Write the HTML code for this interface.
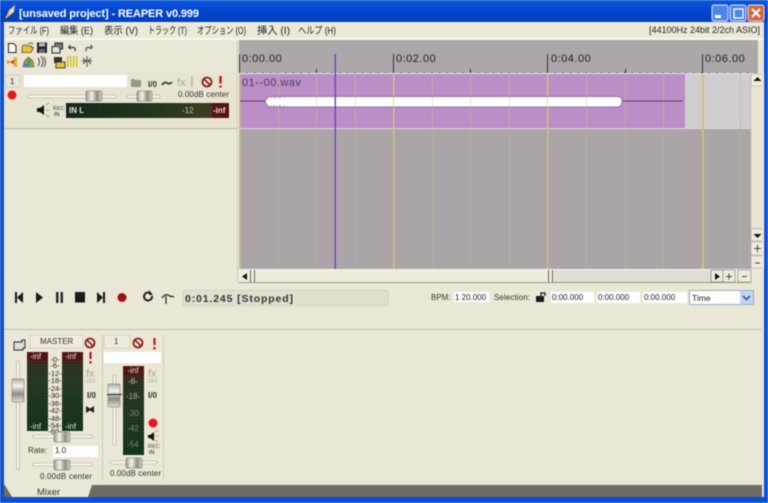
<!DOCTYPE html>
<html><head><meta charset="utf-8"><style>
html,body{margin:0;padding:0;background:#ece9d8;width:768px;height:503px;overflow:hidden}
svg{display:block;filter:blur(.4px)}
text{font-family:"Liberation Sans","Noto Sans CJK JP",sans-serif;fill:#222}
</style></head><body>
<svg xmlns="http://www.w3.org/2000/svg" width="768" height="503" viewBox="0 0 768 503">
<defs>
<linearGradient id="tb" x1="0" y1="0" x2="0" y2="1"><stop offset="0" stop-color="#0a5fe0"/><stop offset=".15" stop-color="#0a4fd8"/><stop offset=".6" stop-color="#0044cc"/><stop offset="1" stop-color="#0340b8"/></linearGradient>
<linearGradient id="th" x1="0" y1="0" x2="1" y2="0"><stop offset="0" stop-color="#9c9a90"/><stop offset=".35" stop-color="#f4f3ee"/><stop offset=".7" stop-color="#8e8c84"/><stop offset="1" stop-color="#d8d6cc"/></linearGradient>
<linearGradient id="tv" x1="0" y1="0" x2="0" y2="1"><stop offset="0" stop-color="#b0aea6"/><stop offset=".3" stop-color="#f4f3ee"/><stop offset=".65" stop-color="#8e8c84"/><stop offset="1" stop-color="#e0ded4"/></linearGradient>
<linearGradient id="hm" x1="0" y1="0" x2="1" y2="0"><stop offset="0" stop-color="#13281a"/><stop offset=".6" stop-color="#25391f"/><stop offset=".85" stop-color="#3f3a22"/><stop offset="1" stop-color="#4c3a22"/></linearGradient>
<linearGradient id="vm" x1="0" y1="0" x2="0" y2="1"><stop offset="0" stop-color="#3e2a20"/><stop offset=".3" stop-color="#2c3a26"/><stop offset="1" stop-color="#14381f"/></linearGradient>
<pattern id="hatch" width="2" height="2" patternUnits="userSpaceOnUse"><rect width="2" height="2" fill="#dcd9cf"/><rect width="1" height="1" fill="#ecebe4"/></pattern>
<pattern id="ribs" width="3" height="3" patternUnits="userSpaceOnUse"><rect width="3" height="1" fill="#000" opacity=".18"/></pattern>
</defs>

<!-- window frame -->
<rect width="768" height="503" fill="#0a4fd6"/>
<rect width="768" height="22" fill="url(#tb)"/>
<rect x="4" y="22" width="760" height="475" fill="#ebe7d8"/>
<!-- title -->
<path d="M6 18 L9 10 L15 5 L14 12 L9 16Z" fill="#e8dcc0" stroke="#8a7a50" stroke-width=".6"/>
<path d="M6 18 L9 13" stroke="#d0c040" stroke-width="1.600"/>
<text x="19" y="17" font-size="11" font-weight="bold" style="fill:#fff" textLength="180">[unsaved project] - REAPER v0.999</text>
<!-- window buttons -->
<rect x="712" y="5" width="16" height="16" rx="2" fill="#4f84ea" stroke="#dfe8fa"/>
<rect x="715" y="15" width="6" height="3" fill="#fff"/>
<rect x="730" y="5" width="16" height="16" rx="2" fill="#4f84ea" stroke="#dfe8fa"/>
<rect x="734" y="9" width="9" height="9" fill="none" stroke="#fff" stroke-width="1.300"/>
<rect x="748" y="5" width="16" height="16" rx="2" fill="#d8663e" stroke="#f4dfd6"/>
<path d="M752 9 L760 17 M760 9 L752 17" stroke="#fff" stroke-width="2"/>
<!-- menu -->
<rect x="4" y="22" width="760" height="17" fill="#ece9d8"/>
<rect x="4" y="38" width="760" height="2" fill="#f8f6ee"/>
<g font-size="10">
<text x="8" y="34" textLength="41" lengthAdjust="spacingAndGlyphs">ファイル (F)</text>
<text x="60" y="34" textLength="33" lengthAdjust="spacingAndGlyphs">編集 (E)</text>
<text x="104" y="34" textLength="34" lengthAdjust="spacingAndGlyphs">表示 (V)</text>
<text x="148" y="34" textLength="39" lengthAdjust="spacingAndGlyphs">トラック (T)</text>
<text x="197" y="34" textLength="49" lengthAdjust="spacingAndGlyphs">オプション (O)</text>
<text x="257" y="34" textLength="33" lengthAdjust="spacingAndGlyphs">挿入 (I)</text>
<text x="298" y="34" textLength="38" lengthAdjust="spacingAndGlyphs">ヘルプ (H)</text>
<text x="649" y="33" font-size="9.500" textLength="111" lengthAdjust="spacingAndGlyphs">[44100Hz 24bit 2/2ch ASIO]</text>
</g>

<!-- toolbar icons -->
<path d="M8.500 43.500h5l2.500 2.500v6.500H8.500z" fill="#fff" stroke="#222"/>
<path d="M22 52.500v-6l1.500-1.500h3l1 1h4v1.500h2l-2.500 5z" fill="#e8c040" stroke="#5a4a10" stroke-width=".8"/>
<path d="M28 44q3-2 5 0" stroke="#2a7a2a" fill="none"/>
<rect x="37" y="42.500" width="10" height="10.500" fill="#22222e"/><rect x="39" y="43" width="6" height="3.500" fill="#b8b8b8"/><rect x="39" y="49" width="6" height="4" fill="#667"/>
<path d="M52 46.500h8v6.500h-8z" fill="#e4e4dc" stroke="#222"/><path d="M55 46v-3h7.500v6h-2.500" fill="#777" stroke="#222"/>
<path d="M68.500 47.500l2-2.500M68.500 47.500l2.500 1.500M69 47.500h4.500a2 2 0 0 1 1 3.500" fill="none" stroke="#334" stroke-width="1.200"/>
<path d="M92.500 47.500l-2-2.500M92.500 47.500l-2.500 1.500M92 47.500h-4.500a2 2 0 0 0-1 3.500" fill="none" stroke="#556" stroke-width="1.200"/>
<path d="M7 59.500l4 2.500-4 2.500z" fill="#e8a020"/><path d="M10 62l7-4.500v9z" fill="#e03a20"/><rect x="14" y="57" width="3" height="10" fill="#e8b020"/>
<path d="M23 67l1.500-6 4-4 4.500 4 1 6z" fill="#c0a040" stroke="#443" stroke-width=".6"/><rect x="27" y="59" width="4" height="8" fill="#50a050"/><rect x="24" y="63" width="4" height="4" fill="#5080c0"/>
<path d="M38 58q3 4 0 8M41 56q4 6 0 11M44 57q3 5 0 10" fill="none" stroke="#555" stroke-width="1.100"/>
<rect x="54" y="57" width="8" height="6" fill="#333"/><rect x="56" y="62" width="9" height="6" fill="#e8c040" stroke="#222" stroke-width=".8"/>
<g fill="#d8c020"><rect x="67" y="56" width="1.500" height="11"/><rect x="70" y="56" width="1.500" height="11"/><rect x="73" y="56" width="1.500" height="11"/><rect x="76" y="56" width="1.500" height="11"/></g>
<path d="M87 56v11M82 61h10M83 58l3 3-3 3M91 58l-3 3 3 3" stroke="#444" fill="none" stroke-width=".9"/>

<!-- arrange view -->
<rect x="239" y="40" width="519" height="33" fill="#aca7a9"/>
<rect x="240" y="73" width="511" height="1" fill="#e8e4e4"/>
<rect x="239" y="129" width="512" height="140" fill="#aba5a8"/>
<rect x="240" y="74" width="445" height="54" fill="#bb8ec8"/>
<rect x="685" y="74" width="66" height="54" fill="#d1ccd0"/>
<rect x="239" y="128" width="512" height="1" fill="#e0dcd8"/>
<!-- faint gridlines -->
<g fill="#c2b29a" opacity=".75">
<rect x="278" y="74" width="1" height="195"/><rect x="316" y="74" width="1" height="195"/><rect x="355" y="74" width="1" height="195"/><rect x="432" y="74" width="1" height="195"/><rect x="470" y="74" width="1" height="195"/><rect x="509" y="74" width="1" height="195"/><rect x="586" y="74" width="1" height="195"/><rect x="625" y="74" width="1" height="195"/><rect x="663" y="74" width="1" height="195"/><rect x="740" y="74" width="1" height="195"/>
</g>
<g fill="#cfc080">
<rect x="239" y="74" width="1.500" height="195"/><rect x="393" y="74" width="1.500" height="195"/><rect x="547" y="74" width="1.500" height="195"/><rect x="702" y="74" width="2" height="195"/>
</g>
<!-- ruler -->
<g fill="#333"><rect x="239" y="54" width="1" height="19"/><rect x="393" y="54" width="1" height="19"/><rect x="547" y="54" width="1" height="19"/><rect x="702" y="54" width="1" height="19"/>
<rect x="316" y="69" width="1" height="4"/><rect x="470" y="69" width="1" height="4"/><rect x="625" y="69" width="1" height="4"/></g>
<path d="M239 72.500H758" stroke="#3a3a3a" stroke-dasharray="1 6.700"/>
<g font-size="11" style="letter-spacing:.5px">
<text x="242" y="62">0:00.00</text><text x="396" y="62">0:02.00</text><text x="551" y="62">0:04.00</text><text x="705" y="62">0:06.00</text>
<text x="242" y="86" style="fill:#4a3a60">01--00.wav</text>
</g>
<!-- waveform -->
<path d="M240 101H265M623 101H683" stroke="#5a3a68"/>
<path d="M265 101L268 96.500H618Q622 97 622 101Q622 106 618 107H268Z" fill="#fff" stroke="#7a5a88" stroke-width=".7"/>
<path d="M268 96.500v2M271 96.500v1.500M274 96.500v2M277 96.500v1.500M280 96.500v2M284 96.500v1.500M268 107v-2M271 107v-1.500M274 107v-2M277 107v-1.500M280 107v-2M284 107v-1.500" stroke="#bb8ec8" stroke-width="1.300"/>
<g fill="#e8d8c8"><rect x="316" y="97" width="1" height="10"/><rect x="355" y="97" width="1" height="10"/><rect x="432" y="97" width="1" height="10"/><rect x="470" y="97" width="1" height="10"/><rect x="509" y="97" width="1" height="10"/><rect x="586" y="97" width="1" height="10"/></g>
<g fill="#e0d890"><rect x="393" y="97" width="1" height="10"/><rect x="547" y="97" width="1" height="10"/></g>
<!-- cursor -->
<rect x="334.500" y="54" width="1.500" height="216" fill="#7a45b8"/>

<!-- vertical scrollbar -->
<rect x="751" y="73" width="13" height="197" fill="#ece9d8"/>
<rect x="751" y="74" width="13" height="12" fill="#efecdf" stroke="#a9a694" stroke-width=".6"/>
<path d="M757.500 77l4 4h-8z" fill="#111"/>
<rect x="751" y="86" width="13" height="142" fill="#e8e5d4" stroke="#c4c1ae" stroke-width=".5"/>
<rect x="751" y="229" width="13" height="12" fill="#efecdf" stroke="#a9a694" stroke-width=".6"/>
<path d="M757.500 238l4-4h-8z" fill="#111"/>
<rect x="751" y="242" width="13" height="13" fill="#efecdf" stroke="#a9a694" stroke-width=".6"/>
<path d="M754 248.500h7M757.500 245v7" stroke="#444"/>
<rect x="751" y="256" width="13" height="12" fill="#efecdf" stroke="#a9a694" stroke-width=".6"/>
<path d="M755 263h5" stroke="#444"/>

<!-- horizontal scrollbar -->
<rect x="239" y="269" width="512" height="14" fill="#efecdf"/>
<rect x="239" y="269" width="512" height="1" fill="#f8f6ee"/>
<rect x="239" y="282" width="512" height="1" fill="#9c9985"/>
<path d="M247 273v7l-5-3.500z" fill="#111"/>
<path d="M250.500 270v12M254.500 270v12" stroke="#66645a"/>
<rect x="255" y="270" width="293" height="12" fill="#eeebdc"/>
<path d="M548.500 270v12M552.500 270v12" stroke="#66645a"/>
<rect x="554" y="270" width="157" height="12" fill="url(#hatch)"/>
<rect x="711" y="270" width="12" height="12" fill="#efecdf" stroke="#66645a" stroke-width=".6"/>
<path d="M715 273v7l5-3.500z" fill="#111"/>
<rect x="723" y="270" width="12" height="12" fill="#efecdf" stroke="#8a8876" stroke-width=".6"/>
<path d="M726 276.500h6M729 273.500v6" stroke="#444"/>
<rect x="738" y="270" width="13" height="12" fill="#efecdf" stroke="#8a8876" stroke-width=".6"/>
<path d="M742 276.500h5" stroke="#444"/>

<!-- left panel track -->
<rect x="4" y="73" width="234" height="55" fill="#e8e4d2"/>
<rect x="4" y="128" width="234" height="1" fill="#b8b49e"/>
<rect x="4" y="129" width="234" height="140" fill="#ebe7d6"/>
<rect x="237" y="40" width="1" height="243" fill="#d0ccb8"/>
<rect x="6" y="75" width="14" height="12" fill="#ebe8da" stroke="#c6c2ae" stroke-width=".6"/>
<text x="10" y="84" font-size="8">1</text>
<rect x="24" y="75" width="103" height="12" fill="#fff"/>
<path d="M131 79h3l1 1h6v7h-10z" fill="#9a9684"/>
<text x="148" y="87" font-size="8" font-weight="bold" style="fill:#333" textLength="9">I/0</text>
<path d="M162 85q3-4 5-2t5-1" stroke="#222" stroke-width="1.500" fill="none"/>
<text x="177" y="86" font-size="11" style="fill:#aaa69a">fx</text>
<path d="M191 76h2v11h-2z" fill="#c4c0ae"/>
<circle cx="207" cy="82" r="4.500" fill="none" stroke="#8a2020" stroke-width="1.800"/><path d="M204 79l6 6" stroke="#8a2020" stroke-width="1.600"/>
<path d="M220.500 76v7.500M220.500 85.500v2" stroke="#c01818" stroke-width="2.400"/>
<circle cx="12" cy="95" r="4.500" fill="#e81818"/>
<!-- track faders -->
<rect x="28" y="95" width="88" height="3" rx="1.500" fill="#f6f5ee" stroke="#a8a596" stroke-width=".6"/>
<rect x="86" y="91" width="16" height="10" rx="1" fill="url(#th)" stroke="#6a685e" stroke-width=".5"/>
<rect x="127" y="95" width="33" height="3" rx="1.500" fill="#f6f5ee" stroke="#a8a596" stroke-width=".6"/>
<rect x="137" y="91" width="15" height="10" rx="1" fill="url(#th)" stroke="#6a685e" stroke-width=".5"/>
<text x="178" y="97" font-size="8" style="fill:#333" textLength="51">0.00dB center</text>
<!-- speaker, rec in -->
<path d="M37 108h3l4-3v10l-4-3h-3z" fill="#111"/><path d="M46 105l3-2M46 110h3M46 115l3 2" stroke="#888" stroke-width=".8"/>
<text x="53" y="110" font-size="5.500" style="fill:#444">REC</text><text x="54" y="116" font-size="5.500" style="fill:#222">IN</text>
<rect x="66" y="103" width="163" height="15" fill="url(#hm)"/>
<rect x="212" y="103" width="17" height="15" fill="#551414"/>
<text x="69" y="113" font-size="8" font-weight="bold" style="fill:#e8e8e0">IN L</text>
<text x="182" y="113" font-size="8" style="fill:#c8c8c0">-12</text>
<text x="213" y="113" font-size="8" font-weight="bold" style="fill:#e8e0d8">-inf</text>

<!-- transport -->
<rect x="4" y="283" width="760" height="46" fill="#ebe7d6"/>
<path d="M15 292h2v11h-2zM23 292v11l-6-5.500z" fill="#1a1a1a"/>
<path d="M36 292l7 5.500-7 5.500z" fill="#1a1a1a"/>
<path d="M56 292h2.500v11H56zM60.500 292H63v11h-2.500z" fill="#2a2a2a"/>
<rect x="75" y="292" width="10" height="10.500" fill="#1a1a1a"/>
<path d="M97 292v11l6-5.500zM103 292h2v11h-2z" fill="#1a1a1a"/>
<circle cx="122" cy="297.500" r="4.500" fill="#a01010"/>
<path d="M150 293a4 4 0 1 0 2 3" fill="none" stroke="#222" stroke-width="2"/><path d="M149 290v5h4z" fill="#222"/>
<path d="M166 304v-8M162 298q4-6 9-1M174 297l-3-1" fill="none" stroke="#222" stroke-width="1.200"/>
<rect x="183" y="290.500" width="205" height="15" fill="#e3dfcd" stroke="#cfcbb8" stroke-width=".7"/>
<text x="185" y="302" font-size="10.500" font-weight="bold" style="fill:#333" textLength="108">0:01.245 [Stopped]</text>
<text x="431" y="300" font-size="8" style="fill:#333">BPM:</text>
<rect x="454" y="292" width="35" height="10" fill="#fff"/>
<text x="455" y="300" font-size="8" style="fill:#222">1 20.000</text>
<text x="494" y="300" font-size="8" style="fill:#333" textLength="36">Selection:</text>
<rect x="536" y="296" width="8" height="6" fill="#1a1a1a"/><path d="M541 296v-3h4v3" fill="none" stroke="#1a1a1a" stroke-width="1.200"/>
<rect x="551" y="292" width="43" height="11" fill="#fff"/><rect x="597" y="292" width="43" height="11" fill="#fff"/><rect x="643" y="292" width="44" height="11" fill="#fff"/>
<g font-size="8" style="fill:#222"><text x="552" y="300">0:00.000</text><text x="598" y="300">0:00.000</text><text x="644" y="300">0:00.000</text></g>
<rect x="689.500" y="290.500" width="64" height="14" fill="#fff" stroke="#7f9db9" stroke-width=".8"/>
<text x="692" y="301" font-size="8.500" style="fill:#222">Time</text>
<rect x="740" y="291" width="13" height="13" fill="#c2d4f2"/>
<path d="M743 296l3.500 3.500 3.500-3.500" fill="none" stroke="#3a5a9a" stroke-width="1.600"/>
<rect x="4" y="329" width="758" height="1" fill="#c4c0aa"/>

<!-- mixer -->
<rect x="4" y="330" width="760" height="155" fill="#ebe7d6"/>
<!-- master -->
<path d="M14 342h8v-2h3v8h-2v2h-9z" fill="#ddd" stroke="#222" stroke-width=".9"/>
<rect x="30" y="335" width="53" height="13" fill="#efecdf" stroke="#c8c4b0" stroke-width=".6"/>
<text x="40" y="344" font-size="8" style="fill:#333">MASTER</text>
<circle cx="90" cy="343" r="4.500" fill="none" stroke="#8a2020" stroke-width="1.800"/><path d="M87 340l6 6" stroke="#8a2020" stroke-width="1.600"/>
<path d="M90.500 352v7M90.500 361v2.500" stroke="#a82020" stroke-width="2.200"/>
<rect x="27" y="352" width="21" height="79" fill="url(#vm)"/><rect x="62" y="352" width="21" height="79" fill="url(#vm)"/>
<rect x="27" y="352" width="21" height="79" fill="url(#ribs)"/><rect x="62" y="352" width="21" height="79" fill="url(#ribs)"/>
<rect x="27" y="352" width="21" height="9" fill="#551414"/><rect x="62" y="352" width="21" height="9" fill="#551414"/>
<g font-size="8" style="fill:#ddd"><text x="30" y="359" style="fill:#ddd">-inf</text><text x="65" y="359" style="fill:#ddd">-inf</text><text x="30" y="429" style="fill:#ddd">-inf</text><text x="65" y="429" style="fill:#ddd">-inf</text></g>
<g font-size="7.500" text-anchor="middle"><text x="55" y="362">-0-</text><text x="55" y="368">-6-</text><text x="55" y="376">-12-</text><text x="55" y="383">-18-</text><text x="55" y="391">-24-</text><text x="55" y="398">-30-</text><text x="55" y="406">-36-</text><text x="55" y="413">-42-</text><text x="55" y="421">-48-</text><text x="55" y="428">-54-</text><text x="55" y="434">-60-</text></g>
<text x="86" y="377" font-size="11" style="fill:#aaa69a">fx</text><text x="86" y="383" font-size="5" style="fill:#aaa69a">OFF</text>
<text x="87" y="398" font-size="8" font-weight="bold" style="fill:#333">I/0</text>
<path d="M86 406l4 2.500 4-2.500v7l-4-2.500-4 2.500z" fill="#222"/>
<!-- master vol fader -->
<rect x="16.500" y="361" width="3" height="109" rx="1.500" fill="#f6f5ee" stroke="#a8a596" stroke-width=".6"/>
<rect x="12" y="379" width="12" height="23" rx="1" fill="url(#tv)" stroke="#6a685e" stroke-width=".5"/>
<rect x="33" y="435" width="59" height="3" rx="1.500" fill="#f6f5ee" stroke="#a8a596" stroke-width=".6"/>
<rect x="54" y="432" width="16" height="10" rx="1" fill="url(#th)" stroke="#6a685e" stroke-width=".5"/>
<text x="28" y="453" font-size="8" style="fill:#333">Rate:</text>
<rect x="53" y="446" width="45" height="11" fill="#fff"/>
<text x="55" y="453" font-size="8" style="fill:#222">1.0</text>
<rect x="33" y="463" width="59" height="3" rx="1.500" fill="#f6f5ee" stroke="#a8a596" stroke-width=".6"/>
<rect x="54" y="460" width="16" height="10" rx="1" fill="url(#th)" stroke="#6a685e" stroke-width=".5"/>
<text x="40" y="479" font-size="8" style="fill:#333" textLength="52">0.00dB center</text>
<!-- strip separators -->
<rect x="102" y="335" width="1" height="145" fill="#cfcbb6"/><rect x="163" y="335" width="1" height="145" fill="#cfcbb6"/>
<!-- track 1 strip -->
<rect x="104" y="335" width="26" height="13" fill="#efecdf" stroke="#c8c4b0" stroke-width=".6"/>
<text x="114" y="344" font-size="8" style="fill:#333">1</text>
<circle cx="138" cy="343" r="4.500" fill="none" stroke="#8a2020" stroke-width="1.800"/><path d="M135 340l6 6" stroke="#8a2020" stroke-width="1.600"/>
<path d="M154.500 338v7M154.500 347v2.500" stroke="#b82020" stroke-width="2.200"/>
<rect x="104" y="352" width="57" height="11" fill="#fff"/>
<rect x="123" y="366" width="21" height="89" fill="url(#vm)"/>
<rect x="123" y="366" width="21" height="89" fill="url(#ribs)"/>
<rect x="123" y="366" width="21" height="9" fill="#551414"/>
<g font-size="8" text-anchor="middle"><text x="133" y="373" style="fill:#ddd">-inf</text><text x="133" y="384" style="fill:#c8c8b8">-6-</text><text x="133" y="399" style="fill:#a8b098">-18-</text><text x="133" y="416" style="fill:#7a8a70">-30</text><text x="133" y="431" style="fill:#7a8a70">-42</text><text x="133" y="447" style="fill:#7a8a70">-54</text></g>
<text x="148" y="377" font-size="11" style="fill:#aaa69a">fx</text><text x="148" y="383" font-size="5" style="fill:#aaa69a">OFF</text>
<text x="148" y="398" font-size="8" font-weight="bold" style="fill:#333">I/0</text>
<circle cx="153" cy="423" r="4.500" fill="#e81818"/>
<path d="M148 435h2l4-3v9l-4-3h-2z" fill="#111"/><path d="M155 432l3-2M155 436h4M155 440l3 2" stroke="#a8a030" stroke-width=".8"/>
<text x="148" y="448" font-size="5.500" style="fill:#444">REC</text><text x="149" y="454" font-size="5.500" style="fill:#222">IN</text>
<rect x="113" y="375" width="3" height="70" rx="1.500" fill="#f6f5ee" stroke="#a8a596" stroke-width=".6"/>
<rect x="108" y="384" width="12" height="23" rx="1" fill="url(#tv)" stroke="#6a685e" stroke-width=".5"/>
<rect x="107" y="394" width="15" height="1" fill="#222"/>
<rect x="110" y="461" width="47" height="3" rx="1.500" fill="#f6f5ee" stroke="#a8a596" stroke-width=".6"/>
<rect x="126" y="458" width="16" height="10" rx="1" fill="url(#th)" stroke="#6a685e" stroke-width=".5"/>
<text x="110" y="476" font-size="8" style="fill:#333" textLength="51">0.00dB center</text>

<!-- bottom tab bar -->
<rect x="4" y="485" width="758" height="12" fill="#6e6a64"/>
<path d="M5 485H92L88 497H12L6 487Z" fill="#ebe7d6"/>
<text x="37" y="495" font-size="9.500" style="fill:#333">Mixer</text>
<rect x="762" y="40" width="2" height="457" fill="#ebe7d6"/>
<rect x="0" y="497" width="768" height="6" fill="#0a4fd6"/>
</svg>
</body></html>
